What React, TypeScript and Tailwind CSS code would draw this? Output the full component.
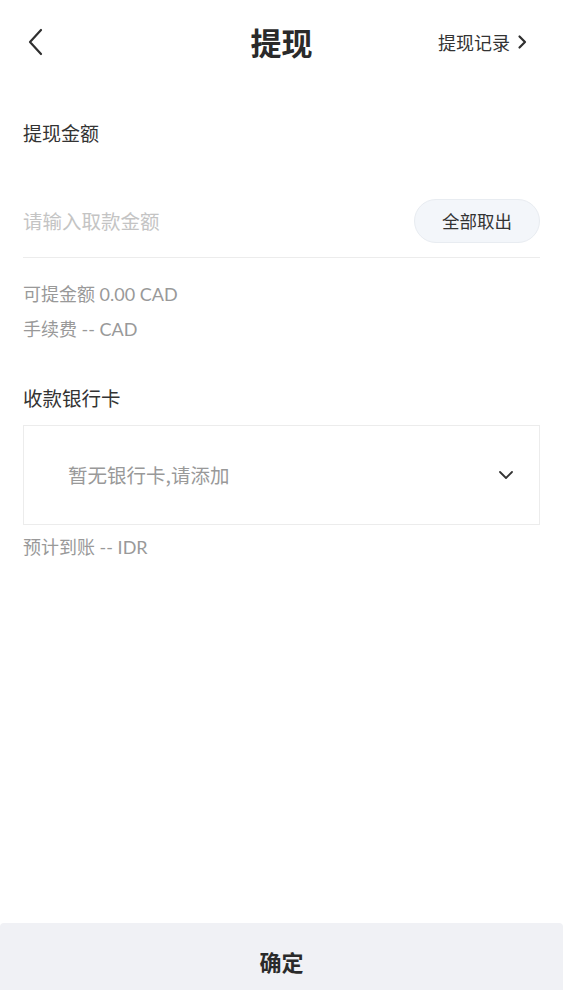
import React from "react";

const font = { fontFamily: '"Noto Sans CJK SC", "Noto Sans", sans-serif' };
const latin = { fontFamily: 'Lato, "Noto Sans CJK SC", sans-serif' };

export default function App() {
  return (
    <div className="flex min-h-[990px] w-full flex-col bg-white text-[#333]" style={font}>
      <div className="grid h-[84px] grid-cols-3 items-center px-[23px]">
        <div className="flex items-center">
          <svg width="18" height="28" viewBox="0 0 18 28" className="ml-[4px]">
            <path d="M14 2 L3 14 L14 26" fill="none" stroke="#2f2f2f" strokeWidth="2.2" strokeLinecap="round" strokeLinejoin="round" />
          </svg>
        </div>
        <div className="text-center text-[31px] font-bold leading-[40px] text-[#2a2a2a]">提现</div>
        <div className="flex items-center justify-end pr-[12px]">
          <span className="text-[18px] leading-[26px] text-[#333]">提现记录</span>
          <svg width="12" height="16" viewBox="0 0 12 16" className="ml-[6px]">
            <path d="M3.5 2.5 L9 8 L3.5 13.5" fill="none" stroke="#2f2f2f" strokeWidth="2.2" strokeLinecap="round" strokeLinejoin="round" />
          </svg>
        </div>
      </div>

      <div className="px-[23px]">
        <div className="mt-[35px] text-[19px] leading-[28px] text-[#333]">提现金额</div>

        <div className="mt-[52px] flex items-center justify-between border-b border-[#ececec] pb-[14px]">
          <span className="text-[19.5px] leading-[28px] text-[#c4c4c4]">请输入取款金额</span>
          <button className="flex h-[44px] w-[126px] items-center justify-center rounded-full border border-[#e8ecf1] bg-[#f3f6fa] text-[17.5px] text-[#333]">
            全部取出
          </button>
        </div>

        <div className="mt-[23px] text-[18px] leading-[26px] text-[#999]" style={latin}>可提金额 0.00 CAD</div>
        <div className="mt-[9px] text-[18px] leading-[26px] text-[#999]" style={latin}>手续费 -- CAD</div>

        <div className="mt-[42px] text-[19.5px] leading-[28px] text-[#333]">收款银行卡</div>

        <div className="mt-[13px] flex h-[100px] items-center justify-between border border-[#ececec] pl-[44px] pr-[25px]">
          <span className="text-[19.5px] leading-[28px] text-[#999]">暂无银行卡,请添加</span>
          <svg width="16" height="12" viewBox="0 0 16 12">
            <path d="M2 3 L8 9 L14 3" fill="none" stroke="#333" strokeWidth="1.8" strokeLinecap="round" strokeLinejoin="round" />
          </svg>
        </div>

        <div className="mt-[9px] text-[18px] leading-[26px] text-[#999]" style={latin}>预计到账 -- IDR</div>
      </div>

      <div className="mt-auto flex h-[67px] items-center justify-center rounded-t-[4px] bg-[#f0f1f5] pt-[10px] text-[22px] font-bold text-[#2a2a2a]">
        确定
      </div>
    </div>
  );
}
